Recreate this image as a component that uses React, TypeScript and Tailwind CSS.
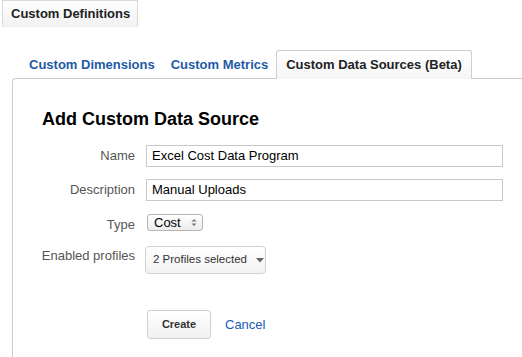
import React from "react";

export default function App() {
  return (
    <div
      className="w-[522px] h-[357px] overflow-hidden bg-white relative"
      style={{ fontFamily: '"Liberation Sans", Arial, sans-serif' }}
    >
      {/* top tab */}
      <div className="pl-[2px]">
        <div className="w-[136px] h-[27px] border-l border-r border-t border-[#d9d9d9] bg-gradient-to-b from-white to-[#f1f1f1] flex items-center pl-[8px] text-[13px] font-bold text-[#222]">
          Custom Definitions
        </div>
      </div>

      {/* sub tabs */}
      <div className="mt-[23px] flex items-end pl-[29px] h-[28px] relative z-10">
        <div className="h-[28px] flex items-center text-[13px] font-bold text-[#1f5aa6] pt-[2px]">
          Custom Dimensions
        </div>
        <div className="ml-[16px] h-[28px] flex items-center text-[13px] font-bold text-[#1f5aa6] pt-[2px]">
          Custom Metrics
        </div>
        <div className="ml-[8px] h-[29px] -mb-px px-[9px] border-l border-r border-t border-[#cfcfcf] rounded-t-[3px] bg-gradient-to-b from-white to-[#f6f6f6] flex items-center text-[13px] font-bold text-[#222]">
          Custom Data Sources (Beta)
        </div>
      </div>

      {/* panel */}
      <div className="ml-[12px] w-[530px] h-[300px] border-l border-t border-[#cccccc] rounded-tl-[4px] pt-[30px]">
        <div className="pl-[29px] text-[18px] font-bold text-black leading-[21px]">
          Add Custom Data Source
        </div>

        <div className="mt-[15px] flex items-center">
          <div className="w-[122px] text-right text-[13px] leading-[16px] text-[#555]">Name</div>
          <div className="ml-[11px] w-[357px] h-[22px] border border-[#c8c8c8] flex items-center px-[5px] text-[13px] text-black">
            Excel Cost Data Program
          </div>
        </div>

        <div className="mt-[12px] flex items-center">
          <div className="w-[122px] text-right text-[13px] leading-[16px] text-[#555]">Description</div>
          <div className="ml-[11px] w-[357px] h-[22px] border border-[#c8c8c8] flex items-center px-[5px] text-[13px] text-black">
            Manual Uploads
          </div>
        </div>

        <div className="mt-[13px] flex items-start">
          <div className="w-[122px] text-right text-[13px] leading-[16px] text-[#555] pt-[3px]">Type</div>
          <div className="ml-[12px] w-[56px] h-[17px] border border-[#b5b5b5] rounded-[3px] bg-gradient-to-b from-white to-[#ececec] flex items-center pl-[6px] text-[13px] text-black">
            <span className="leading-none">Cost</span>
            <svg width="6" height="9" viewBox="0 0 6 9" className="ml-[10px] shrink-0">
              <path d="M0.5 3.5 L3 1 L5.5 3.5 Z" fill="#777" />
              <path d="M0.5 5.5 L3 8 L5.5 5.5 Z" fill="#777" />
            </svg>
          </div>
        </div>

        <div className="mt-[13px] flex items-start">
          <div className="w-[122px] text-right text-[13px] leading-[16px] text-[#555] pt-[2px]">Enabled profiles</div>
          <div className="ml-[10px] w-[121px] h-[28px] shrink-0 border border-[#d0d0d0] rounded-[4px] bg-gradient-to-b from-white to-[#f3f3f3] flex items-center pl-[7px] text-[11.5px] text-[#333] whitespace-nowrap">
            <span>2 Profiles selected</span>
            <svg width="8" height="5" viewBox="0 0 8 5" className="ml-[9px] shrink-0">
              <path d="M0 0 L8 0 L4 4.5 Z" fill="#666" />
            </svg>
          </div>
        </div>

        <div className="mt-[36px] flex items-center">
          <div className="ml-[134px] w-[64px] h-[29px] border border-[#cfcfcf] rounded-[3px] bg-gradient-to-b from-white to-[#f1f1f1] flex items-center justify-center text-[11px] font-bold text-[#333]">
            Create
          </div>
          <div className="ml-[14px] text-[13px] text-[#1a5bb4]">Cancel</div>
        </div>
      </div>
    </div>
  );
}
